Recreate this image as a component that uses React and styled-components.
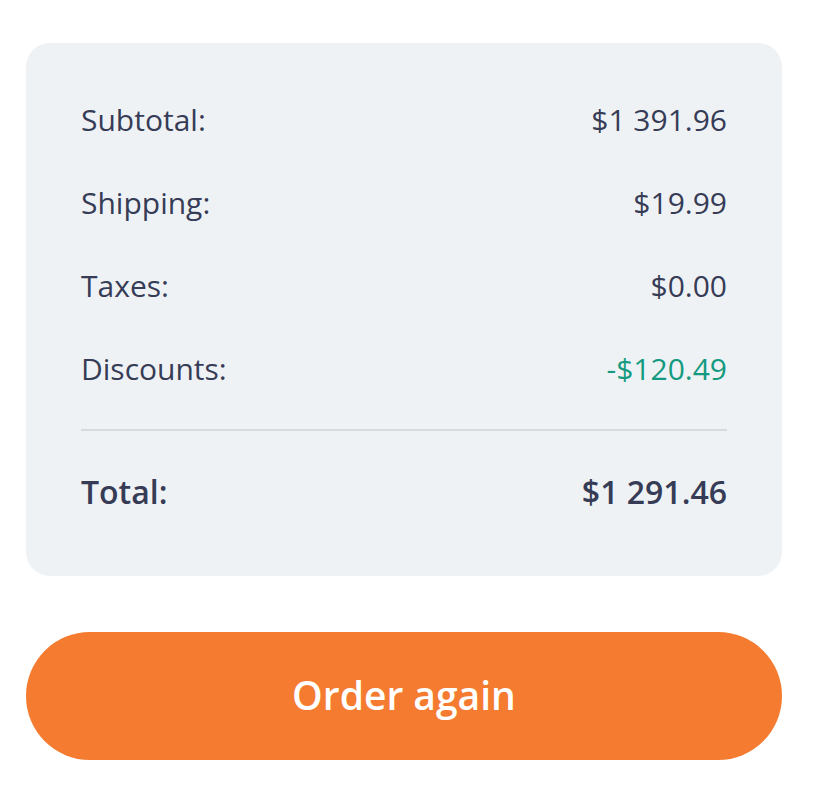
import styled, { createGlobalStyle } from "styled-components";

const GlobalStyle = createGlobalStyle`
  body {
    margin: 0;
    background: #ffffff;
    font-family: "Open Sans", "Liberation Sans", sans-serif;
  }
`;

const Page = styled.div`
  width: 756px;
  padding: 43px 26px 0;
  display: flex;
  flex-direction: column;
  gap: 56px;
`;

const Summary = styled.div`
  background: #eff2f5;
  border-radius: 24px;
  padding: 56px 55px 65px;
  display: flex;
  flex-direction: column;
`;

const Lines = styled.div`
  display: flex;
  flex-direction: column;
  gap: 43px;
`;

const Row = styled.div`
  display: flex;
  justify-content: space-between;
  align-items: center;
  height: 40px;
  font-size: ${(p) => (p.total ? "32px" : "30px")};
  font-weight: ${(p) => (p.total ? 600 : 400)};
  color: #363c55;
`;

const Value = styled.span`
  color: ${(p) => (p.discount ? "#149a80" : "#363c55")};
`;

const Divider = styled.hr`
  border: none;
  border-top: 2px solid #d7dbe0;
  margin: 41px 0 40px;
`;

const OrderButton = styled.button`
  height: 128px;
  padding: 0 0 4px;
  border: none;
  border-radius: 64px;
  background: #f47b30;
  color: #ffffff;
  font-family: "Open Sans", "Liberation Sans", sans-serif;
  font-size: 39px;
  font-weight: 600;
  cursor: pointer;
`;

const lines = [
  { label: "Subtotal:", value: "$1 391.96" },
  { label: "Shipping:", value: "$19.99" },
  { label: "Taxes:", value: "$0.00" },
  { label: "Discounts:", value: "-$120.49", discount: true },
];

export default function App() {
  return (
    <>
      <GlobalStyle />
      <Page>
        <Summary>
          <Lines>
            {lines.map((l) => (
              <Row key={l.label}>
                <span>{l.label}</span>
                <Value discount={l.discount}>{l.value}</Value>
              </Row>
            ))}
          </Lines>
          <Divider />
          <Row total>
            <span>Total:</span>
            <Value>$1 291.46</Value>
          </Row>
        </Summary>
        <OrderButton type="button">Order again</OrderButton>
      </Page>
    </>
  );
}
